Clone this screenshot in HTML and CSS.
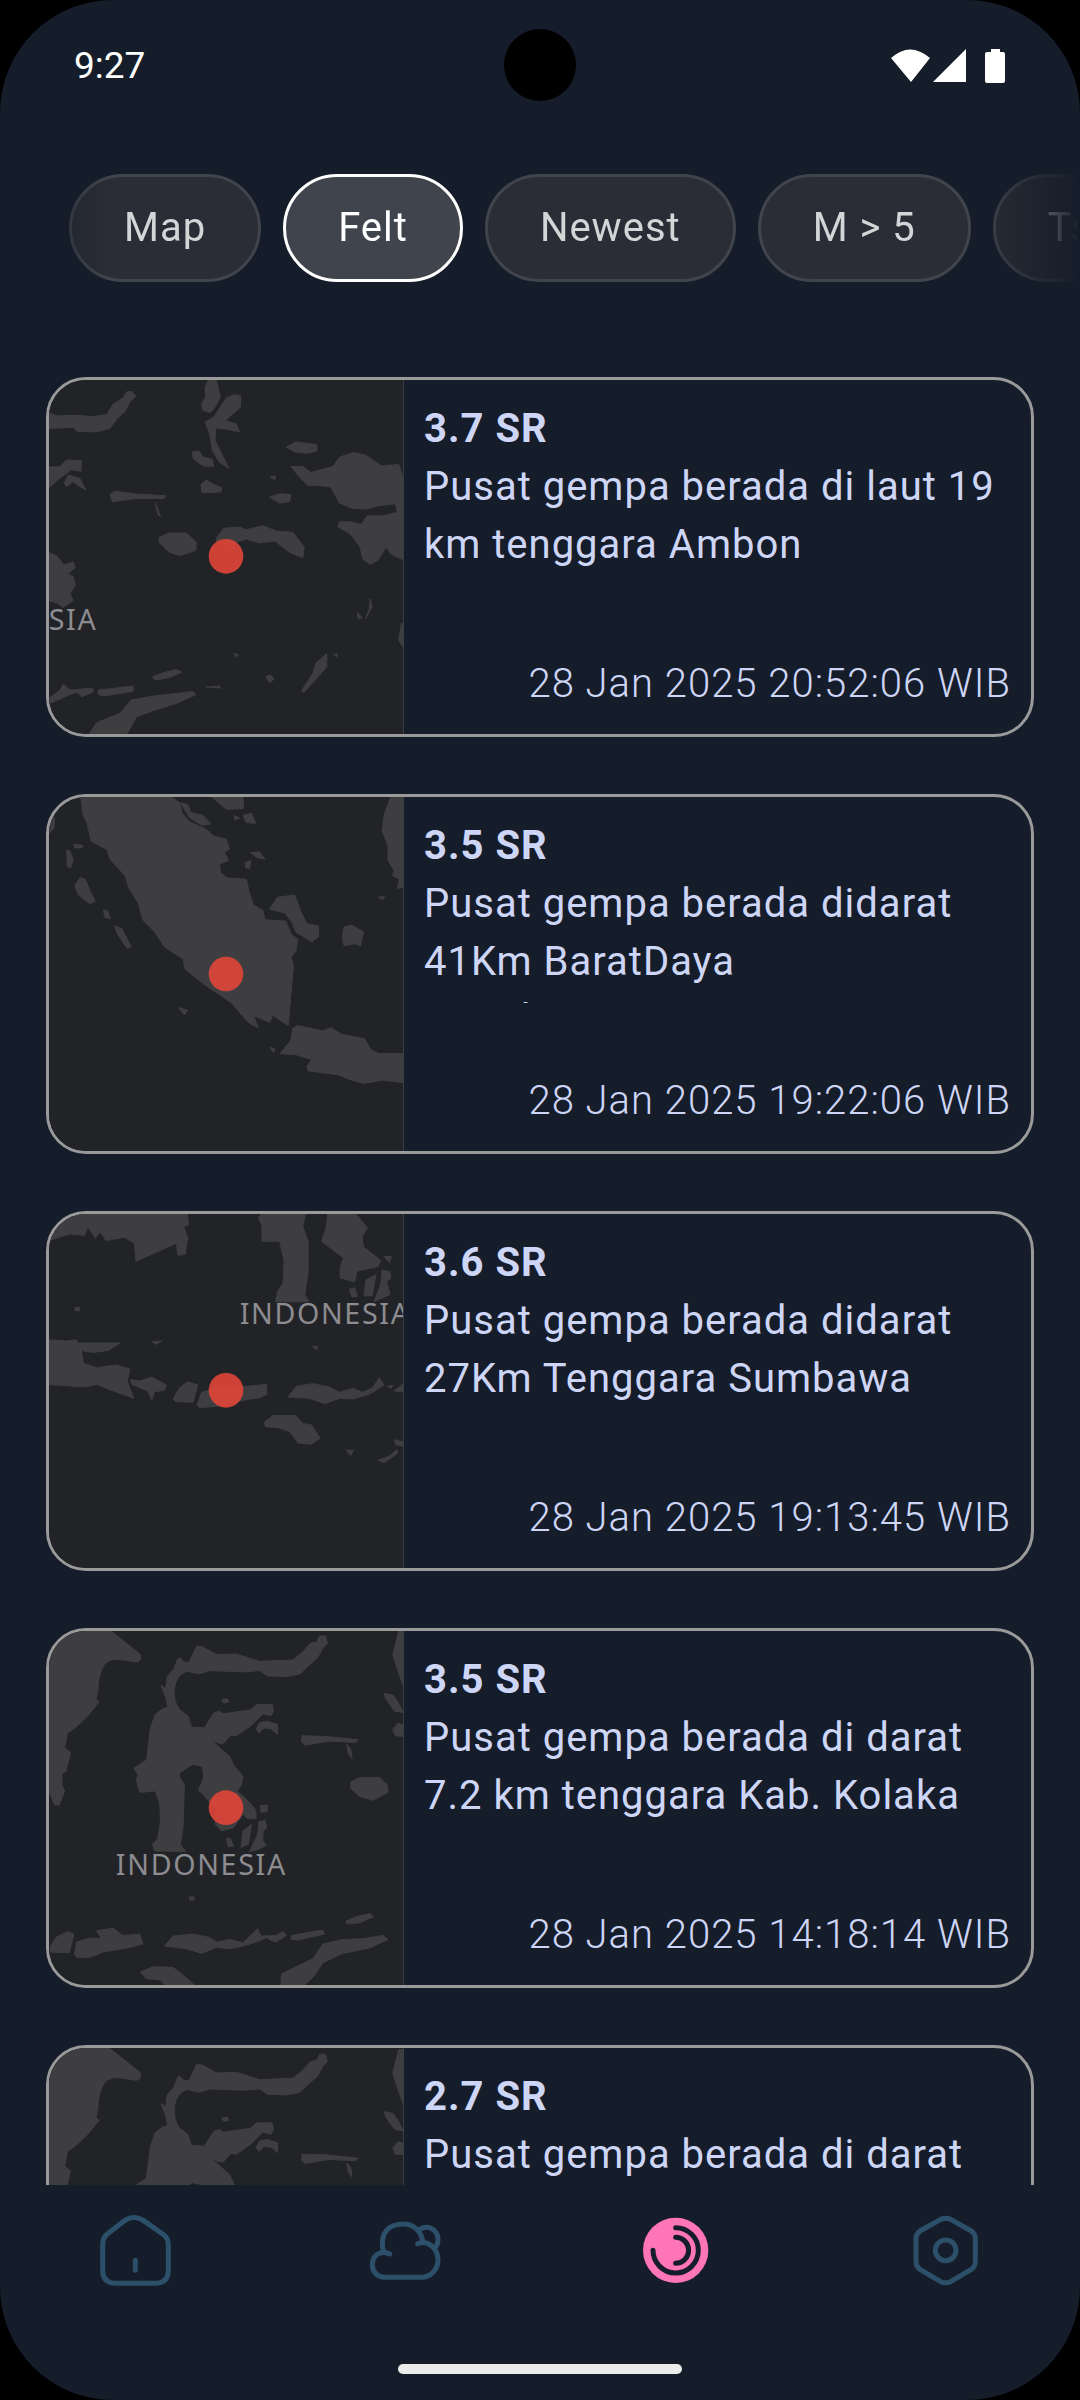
FILE: index.html
```html
<!DOCTYPE html>
<html lang="id">
<head>
<meta charset="utf-8">
<meta name="viewport" content="width=device-width, initial-scale=1">
<title>Gempa</title>
<link rel="stylesheet" href="styles.css">
</head>
<body>
<svg class="defs" aria-hidden="true">
  <symbol id="sulawesi" viewBox="0 0 1200 1170" overflow="visible">
    <g class="land">
      <path d="M40 40H232L330 118Q340 140 318 142L262 134Q228 134 218 160Q204 190 204 230L198 254L208 262L172 306Q140 340 112 356L104 400L122 414L108 470L96 478V512L104 530L88 572L74 572L60 538L40 520Z"/>
      <path d="M450 130L462 142L478 144L500 95L518 96L560 120L620 118L690 140L790 136L820 112L842 86L862 82L870 64L888 64L894 86L880 100L864 130L832 158L812 178L770 186L714 184L690 168L640 172L540 168L510 178L470 170Q440 182 434 220Q430 262 450 286L474 304L486 338L524 340L552 296L568 290L580 298L664 286L680 270H728L732 290L724 304L700 298L664 334L620 364L604 362L580 388L566 386L544 376L600 426L612 452L640 486L636 510L622 530Q660 560 678 588L680 612L656 614L640 600L612 640L576 650L556 630L560 590L520 540L506 528L522 490L518 456L488 450L450 476V490L464 510L460 640L452 690L468 712L374 710L368 690L384 672L392 620L390 566L376 530L330 534L320 500L324 480L312 462L350 436L362 340L376 300L400 282L414 278L406 240L412 186L432 164L444 132Z"/>
      <path d="M394 212L408 222L414 256L404 240ZM576 256L592 252L598 262L582 266ZM680 344L690 324L712 320L744 330V360L726 344L704 340L688 356ZM818 364L890 366L986 376L978 384L900 380L826 392L816 382ZM952 390L964 404L968 434L956 416ZM964 502L990 490H1052L1074 512L1076 534L1030 558L990 546L964 522ZM692 574L714 572L712 592L694 594ZM640 650L666 630L656 690L634 700ZM688 622L706 618L712 640L700 650V680L710 692L686 706L660 712L684 660ZM590 672L602 672L612 696L596 698ZM478 848L492 848L494 858L480 858Z"/>
      <path d="M1108 50H1124V220L1106 170L1090 120ZM1064 236L1092 242L1110 270L1122 294L1096 290L1070 254ZM1106 326L1124 332V366L1098 364L1090 346Z"/>
      <path d="M60 1000L78 970L112 952L132 960L118 1016L62 1014ZM134 1020L140 984L180 972L214 974L200 950L250 942L278 964L330 960L340 990L300 1000L220 1014L180 1030L140 1030ZM404 996L430 966L490 960L540 970L560 984L600 976L640 986L684 944L694 966L740 964L760 952L770 964L740 984L722 978L712 970L680 984L640 996L600 1004L560 1000L516 1018L470 1004ZM786 964L880 948L884 960L806 978L784 976ZM948 922L980 908L1022 898L1032 908L990 926L954 930ZM754 1118L756 1080L804 1056L850 1034L880 990L940 976L1000 974L1060 964L1076 976L1020 1002L940 1018L880 1046L854 1086L820 1118ZM332 1074L370 1058L430 1060L456 1080L500 1118H410L390 1098L350 1094Z"/>
    </g>
  </symbol>
</svg>
<div class="screen">
  <header class="status">
    <time class="clock">9:27</time>
    <svg class="status-icons" viewBox="0 0 114 34" role="img" aria-label="Wi-Fi, signal, battery">
      <path d="M0 9Q19-8 39 9L20 33ZM42 33L75 0V33Z"/>
      <path d="M100 0h9v3h3q2 0 2 2v27q0 2-2 2H96q-2 0-2-2V5q0-2 2-2h4Z"/>
    </svg>
    <span class="camera"></span>
  </header>

  <div class="chips">
    <button class="chip" type="button">Map</button>
    <button class="chip selected" type="button" aria-pressed="true">Felt</button>
    <button class="chip" type="button">Newest</button>
    <button class="chip" type="button">M &gt; 5</button>
    <button class="chip" type="button">Tsunami</button>
  </div>

  <main class="list">
    <article class="card">
      <svg class="map" viewBox="57 58 1064 1064" role="img" aria-label="Map near Ambon">
        <g class="land">
          <path d="M50 154L80 166L130 164L190 168L230 162L250 130L280 112L290 94L306 92L318 106L300 124L286 152L262 174L240 204L200 214L140 212L130 200L50 204Z"/>
          <path d="M50 320L90 318L110 298L154 300L154 332L124 328L86 356L50 388ZM102 368L116 344L150 354L168 388L148 378L130 364L110 378ZM240 402L256 392L310 400L408 406L402 414L320 414L248 424ZM376 426L392 468L384 462ZM388 530L420 518H470L500 546L498 570L450 586L416 574L388 546Z"/>
          <path d="M540 50H558L572 110L552 146L540 156L518 148L516 128L528 110L526 80ZM526 184L552 170L590 112L614 102L634 106L632 140L600 168L586 180L620 190L630 214L590 206L558 202L556 240L576 280L598 324L568 304L548 270L540 220ZM488 274L508 272L520 290L548 296L552 318L520 316L490 294ZM514 372L530 358L548 370L576 382L574 394L550 396L516 396Z"/>
          <path d="M770 260L800 244L862 252V272L834 278L800 276ZM720 410L750 400L784 402L780 424L750 428ZM722 350L738 346L736 358ZM784 318L820 318L844 336L910 318L930 290L970 276L1010 284L1056 316L1108 312L1124 360V600L1084 580L1070 560L1046 600L1022 612L1000 596L992 560L962 520L926 500L930 484L960 484L996 492L1014 466L1060 466L1104 456L1098 430L1046 436L1010 446L970 444L930 428L904 380L862 374L836 376L810 350Z"/>
          <path d="M560 534L582 504L630 500L650 508L700 496L740 512L790 516L824 560L820 592L780 576L736 542L690 548L650 536L600 552L560 548Z"/>
          <path d="M50 574L80 586L102 614L130 604L136 622L114 640L130 650L136 674L120 700L130 720L100 742L80 728L50 720ZM1022 716L1028 740L1008 776L1020 746ZM984 756L998 772L986 776ZM1116 790H1124V864L1108 840ZM892 880V920L862 954L822 998L816 992L850 940L860 908ZM708 950L722 944L734 956L720 968ZM368 950L400 938L440 928L456 936L420 952L376 960ZM528 980L570 978L572 984ZM50 1020L90 990L100 972L120 990L188 984L190 996L156 1010L140 996L100 1012L60 1030ZM206 990L310 978V994L220 1008L204 1002ZM176 1124L200 1088L270 1060L304 1020L370 1008L440 1000L490 994L498 1004L440 1030L370 1052L320 1070L290 1124ZM912 882L924 882L922 892ZM614 880L626 884L620 892Z"/>
        </g>
        <text class="place" x="56" y="810">SIA</text>
        <circle class="quake" cx="589" cy="588" r="52"/>
      </svg>
      <div class="info">
        <h2 class="mag">3.7 SR</h2>
        <p class="desc">Pusat gempa berada di laut 19 km tenggara Ambon</p>
        <time class="when">28 Jan 2025 20:52:06 WIB</time>
      </div>
    </article>

    <article class="card">
      <svg class="map" viewBox="57 49 1064 1064" role="img" aria-label="Map of southern Sumatra">
        <g class="land">
          <path d="M152 40H410L450 66L456 96L480 124L530 146L552 166L590 176L600 206L584 214L596 240L570 250L572 276L592 292L650 296L660 340L672 374L700 390L706 418L768 422L786 462L804 476L800 510L784 530L792 556L786 620L776 736L746 716L730 704L720 726L672 706L686 742L660 730L636 704L606 668L520 610L466 566L460 536L404 500L376 456L340 420L324 366L296 320L286 286L240 236L232 208L184 182L172 130L158 96Z"/>
          <path d="M452 66L474 72L484 96L520 104L544 130L516 134L480 112ZM540 44H640L642 84L590 86ZM640 104L666 98L678 128L650 126ZM612 104L630 112L616 118ZM662 216L690 214L706 236L680 230ZM646 246L664 240L660 264L648 262ZM720 386L744 350L796 344L814 394L832 430L866 436L868 468L848 484L800 456L786 424L766 398ZM944 440L966 434L1002 454L994 496L976 490L944 496L938 470ZM1046 350L1066 348L1060 358Z"/>
          <path d="M1124 50H1084L1066 96L1058 150L1076 196V240L1094 270L1090 286L1110 296L1104 324L1124 320ZM752 820L784 780L790 744L804 736L880 752L904 742L936 762L1006 776L1024 808L1048 820H1124V908L1060 900L1004 910L960 898L926 884L836 872L832 860L846 838L800 824Z"/>
          <path d="M55 100L74 112L72 144L55 160ZM132 192L160 194L156 202L134 202ZM110 208L120 212L130 236L122 262L112 258ZM134 316L150 292L166 296L182 334L196 362L180 370L146 344ZM220 388L232 390L242 414L226 412ZM254 436L276 444L304 500L292 504L262 460ZM446 682L474 690L464 704ZM722 802L736 806L732 818Z"/>
        </g>
        <circle class="quake" cx="589" cy="581" r="52"/>
      </svg>
      <div class="info">
        <h2 class="mag">3.5 SR</h2>
        <p class="desc">Pusat gempa berada didarat 41Km BaratDaya Bintuhan&#8209;Sumatera</p>
        <time class="when">28 Jan 2025 19:22:06 WIB</time>
      </div>
    </article>

    <article class="card">
      <svg class="map" viewBox="57 58 1064 1064" role="img" aria-label="Map near Sumbawa">
        <g class="land">
          <path d="M50 50H472L476 90L462 96L474 130L466 180L444 182L440 146L318 200L314 146L284 128L228 138L212 112L196 130L174 96L164 122L120 118L50 140Z"/>
          <path d="M700 50H830L820 96L836 140V230L826 300L838 322H738L744 290L760 266L764 200L750 140L698 140L696 90L686 70ZM896 50H974L1014 100L998 126L1002 156L1054 198L1046 216L982 230L976 262L932 250V220L942 190L876 140L890 100ZM1064 186L1086 186L1080 204ZM1010 256L1040 240L1028 304L1004 304ZM1058 226L1082 232L1084 252L1072 262L1082 300L1034 322L1054 270ZM960 284L976 280L984 306L968 308ZM134 340L148 338L148 350L136 348Z"/>
          <path d="M50 436L110 440L138 436L154 462L160 506L200 520L260 512L300 524L292 560L312 612L240 586L200 570L164 578L50 570ZM142 446L270 446L236 468L190 474L160 470ZM368 442L396 440L376 450ZM302 556L330 560L366 548L410 572L404 588L374 592L366 618L354 590L306 570ZM430 614L450 580L474 562L504 572L490 624L438 622ZM502 632L516 594L560 580L650 576L710 570L712 600L690 610L640 618L586 634L510 640ZM776 608L800 576L850 568L900 578L930 594L970 582L1000 594L1030 580L1050 550L1064 572L1020 600L970 614L930 612L886 628L840 612ZM1074 576L1090 572L1086 582ZM1094 590L1124 566V592ZM704 684L730 664L798 664L820 688L846 692L872 732L844 750L806 746L780 712L744 700L708 698ZM950 768L972 768L964 784ZM1046 798L1080 786L1102 766L1106 776L1064 806ZM1094 736L1124 744V756L1100 752ZM848 456L864 456L862 466Z"/>
        </g>
        <text class="place" x="630" y="390">INDONESIA</text>
        <circle class="quake" cx="589" cy="588" r="52"/>
      </svg>
      <div class="info">
        <h2 class="mag">3.6 SR</h2>
        <p class="desc">Pusat gempa berada didarat 27Km Tenggara Sumbawa</p>
        <time class="when">28 Jan 2025 19:13:45 WIB</time>
      </div>
    </article>

    <article class="card">
      <svg class="map" viewBox="57 49 1064 1064" role="img" aria-label="Map near Kolaka">
        <use href="#sulawesi" width="1200" height="1170"/>
        <text class="place" x="258" y="781">INDONESIA</text>
        <circle class="quake" cx="589" cy="580" r="52"/>
      </svg>
      <div class="info">
        <h2 class="mag">3.5 SR</h2>
        <p class="desc">Pusat gempa berada di darat 7.2 km tenggara Kab. Kolaka</p>
        <time class="when">28 Jan 2025 14:18:14 WIB</time>
      </div>
    </article>

    <article class="card">
      <svg class="map" viewBox="57 45 1064 1064" role="img" aria-label="Map of Sulawesi">
        <use href="#sulawesi" width="1200" height="1170"/>
        <circle class="quake" cx="589" cy="580" r="52"/>
      </svg>
      <div class="info">
        <h2 class="mag">2.7 SR</h2>
        <p class="desc">Pusat gempa berada di darat</p>
      </div>
    </article>
  </main>

  <nav class="tabs">
    <a class="tab" href="#home" aria-label="Home">
      <svg viewBox="106 93 237 237"><path d="M193 121L140 162Q126 174 126 194V270Q126 310 166 310H283Q323 310 323 270V194Q323 174 309 164L248 121Q220 104 193 121ZM224 241V271"/></svg>
    </a>
    <a class="tab" href="#weather" aria-label="Weather">
      <svg viewBox="918 93 237 237"><path d="M970 216C956 150 994 132 1030 132C1062 132 1086 156 1088 187M989 222C966 210 937 222 937 254C937 276 954 292 974 292H1082C1112 292 1134 268 1134 240C1134 204 1102 178 1073 191M1079 148C1108 132 1134 152 1134 178C1134 188 1130 198 1125 204"/></svg>
    </a>
    <a class="tab active" href="#quakes" aria-label="Earthquakes" aria-current="page">
      <svg viewBox="106 93 237 237"><circle cx="225" cy="211" r="98"/><path d="M225 143A68 68 0 1 1 157 211M225 172A39 39 0 0 1 225 250"/></svg>
    </a>
    <a class="tab" href="#settings" aria-label="Settings">
      <svg viewBox="916 93 237 237"><path d="M1020 118Q1035 112 1050 118L1112 153Q1124 162 1124 176V246Q1124 260 1112 268L1050 305Q1035 312 1020 305L958 268Q946 260 946 246V176Q946 162 958 153ZM1066 211A31 31 0 1 1 1004 211A31 31 0 1 1 1066 211Z"/></svg>
    </a>
  </nav>
  <div class="home-bar"></div>
</div>
</body>
</html>
```
FILE: styles.css
```css
* { box-sizing: border-box; }

body {
  margin: 0;
  background: #000;
  font-family: Roboto, "Liberation Sans", sans-serif;
  font-size: 40px;
  line-height: 58px;
  letter-spacing: 1px;
  color: #ced6f8;
}

.defs { display: block; width: 0; height: 0; }

.screen {
  display: flex;
  flex-direction: column;
  height: 100vh;
  overflow: hidden;
  border-radius: 113px;
  background: #161d2a;
}

.status {
  position: relative;
  display: flex;
  justify-content: space-between;
  align-items: center;
  height: 132px;
  padding: 0 75px 0 74px;
  flex: none;
}
.clock {
  font-size: 37px;
  letter-spacing: 0;
  color: #fff;
}
.status-icons { width: 114px; height: 34px; fill: #fff; }
.camera {
  position: absolute;
  top: 29px;
  left: 50%;
  width: 72px;
  height: 72px;
  margin-left: -36px;
  border-radius: 50%;
  background: #000;
}

.chips {
  display: flex;
  flex: none;
  gap: 22px;
  padding: 42px 0 40px 69px;
  overflow: hidden;
  -webkit-mask-image: linear-gradient(90deg, transparent, #000 105px, #000 calc(100% - 105px), transparent);
  mask-image: linear-gradient(90deg, transparent, #000 105px, #000 calc(100% - 105px), transparent);
}
.chip {
  flex: none;
  height: 108px;
  padding: 0 52px;
  border: 3px solid #40444c;
  border-radius: 54px;
  background: #2a2d35;
  color: #d4d5d7;
  font: inherit;
  letter-spacing: inherit;
}
.chip.selected {
  border-color: #fff;
  background: #40444c;
  color: #fff;
}

.list {
  flex: 1;
  min-height: 0;
  overflow: hidden;
  display: flex;
  flex-direction: column;
  gap: 57px;
  padding: 55px 46px 0;
}
.card {
  flex: none;
  display: flex;
  height: 360px;
  border: 3px solid #9a9a9a;
  border-radius: 40px;
  overflow: hidden;
}
.map {
  flex: none;
  width: 355px;
  height: 354px;
  border-right: 1px solid #3a3d44;
  background: #222326;
}
.land { fill: #3e3e40; stroke: #3e3e40; stroke-width: 3; stroke-linejoin: round; }
.place {
  font-family: "Noto Sans", sans-serif;
  font-size: 86px;
  letter-spacing: 5px;
  fill: #8c8c91;
}
.quake { fill: #dc4438; fill-opacity: .92; }

.info {
  flex: 1;
  min-width: 0;
  display: flex;
  flex-direction: column;
  padding: 20px 20px 21px;
}
.mag { margin: 0; font-size: 40px; font-weight: 700; line-height: 58px; }
.desc { margin: 0; height: 128px; overflow: hidden; }
.when { margin-top: auto; align-self: flex-end; font-weight: 300; }

.tabs {
  flex: none;
  display: grid;
  grid-template-columns: repeat(4, 1fr);
  margin-top: 20px;
  padding: 5px 0 74px;
  border-top: 1px solid #141a25;
}
.tab { display: flex; justify-content: center; }
.tab svg {
  width: 79px;
  height: 79px;
  fill: none;
  stroke: #2c5069;
  stroke-width: 15;
  stroke-linecap: round;
  stroke-linejoin: round;
}
.tab.active circle { fill: #ff75b7; stroke: none; }
.tab.active path { stroke: #161d2a; }

.home-bar {
  flex: none;
  align-self: center;
  width: 284px;
  height: 10px;
  margin-bottom: 26px;
  border-radius: 5px;
  background: #ececec;
}
```
